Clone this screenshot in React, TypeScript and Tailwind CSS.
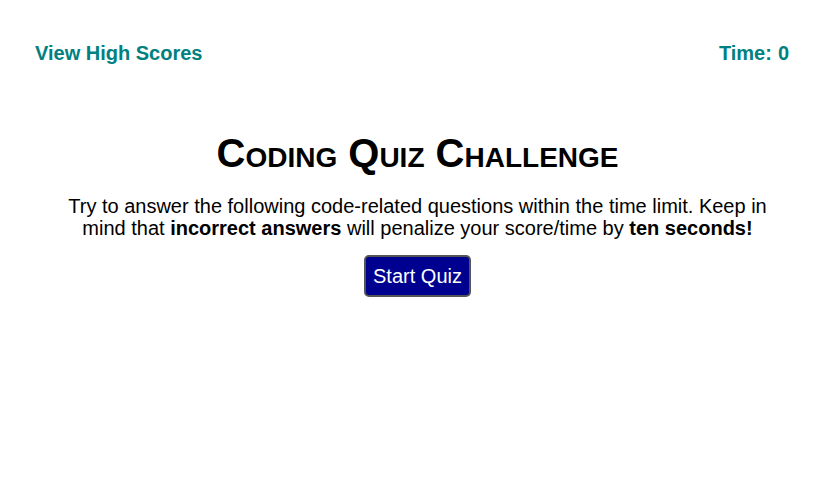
export default function App() {
  return (
    <div className="min-h-screen bg-white font-['Liberation_Sans',Arial,sans-serif] text-black">
      <header className="flex items-center justify-between pl-[35px] pr-[46px] pt-[42px] text-[20px] font-bold leading-[23px] text-[#008080]">
        <a href="#">View High Scores</a>
        <div className="flex gap-[6px]">
          <span>Time:</span>
          <span>0</span>
        </div>
      </header>
      <main className="mx-auto flex max-w-[720px] flex-col items-center pt-[68px] text-center">
        <h1 className="text-[40px] font-bold leading-none [font-variant:small-caps]">
          Coding Quiz Challenge
        </h1>
        <p className="mt-[22px] text-[20px] leading-[22px]">
          Try to answer the following code-related questions within the time limit. Keep in mind
          that <strong>incorrect answers</strong> will penalize your score/time by{" "}
          <strong>ten seconds!</strong>
        </p>
        <button className="mt-[16px] rounded-[5px] border-2 border-[#555] bg-[#000090] px-[7px] py-[6px] text-[20px] leading-[26px] text-white">
          Start Quiz
        </button>
      </main>
    </div>
  );
}
